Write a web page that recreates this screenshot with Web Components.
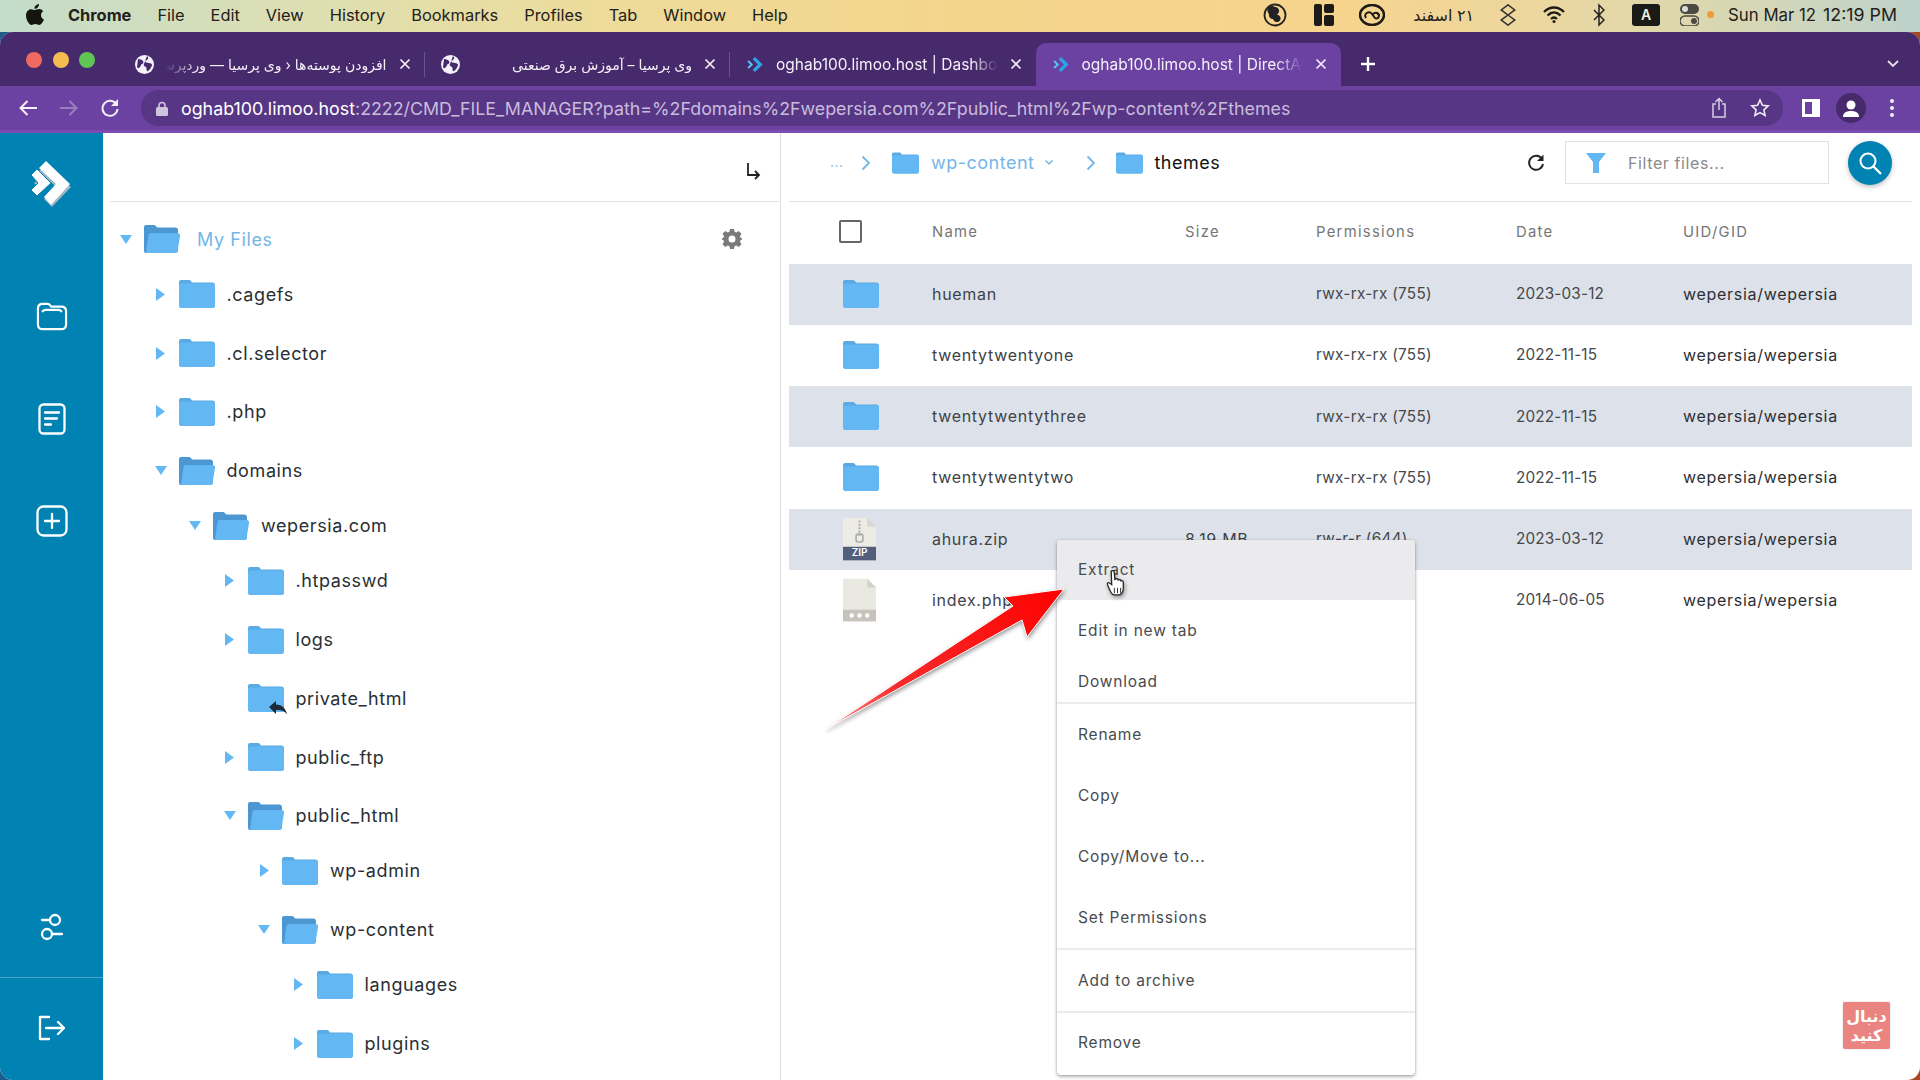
<!DOCTYPE html>
<html><head><meta charset="utf-8"><title>DirectAdmin</title>
<style>
html,body{margin:0;height:1080px;overflow:hidden}
body{position:relative;display:flex;flex-direction:column;background:linear-gradient(90deg,#1d5c8c 0,#1d5c8c 50%,#a9481f 100%);font-family:Inter,"DejaVu Sans",sans-serif}
.over{position:absolute}
</style></head><body>
<x-menubar></x-menubar>
<x-window>
  <x-tabstrip slot="tabs">
    <x-tab rtl globe label="افزودن پوسته‌ها ‹ وی پرسیا — وردپرس"></x-tab>
    <x-tab rtl globe label="وی پرسیا – آموزش برق صنعتی"></x-tab>
    <x-tab label="oghab100.limoo.host | Dashboard"></x-tab>
    <x-tab active label="oghab100.limoo.host | DirectAdmin"></x-tab>
  </x-tabstrip>
  <x-urlbar slot="bar"></x-urlbar>
  <x-sidebar slot="side"></x-sidebar>
  <x-treepanel slot="tree">
    <x-node root state="open" label="My Files">
      <x-node state="closed" label=".cagefs"></x-node>
      <x-node state="closed" label=".cl.selector"></x-node>
      <x-node state="closed" label=".php"></x-node>
      <x-node state="open" label="domains">
        <x-node state="open" label="wepersia.com">
          <x-node state="closed" label=".htpasswd"></x-node>
          <x-node state="closed" label="logs"></x-node>
          <x-node state="link" label="private_html"></x-node>
          <x-node state="closed" label="public_ftp"></x-node>
          <x-node state="open" label="public_html">
            <x-node state="closed" label="wp-admin"></x-node>
            <x-node state="open" label="wp-content">
              <x-node state="closed" label="languages"></x-node>
              <x-node state="closed" label="plugins"></x-node>
            </x-node>
          </x-node>
        </x-node>
      </x-node>
    </x-node>
  </x-treepanel>
  <x-files slot="files">
    <x-file sel kind="folder" name="hueman" perm="rwx-rx-rx (755)" date="2023-03-12"></x-file>
    <x-file kind="folder" name="twentytwentyone" perm="rwx-rx-rx (755)" date="2022-11-15"></x-file>
    <x-file sel kind="folder" name="twentytwentythree" perm="rwx-rx-rx (755)" date="2022-11-15"></x-file>
    <x-file kind="folder" name="twentytwentytwo" perm="rwx-rx-rx (755)" date="2022-11-15"></x-file>
    <x-file sel kind="zip" name="ahura.zip" size="8.19 MB" perm="rw-r-r (644)" date="2023-03-12"></x-file>
    <x-file kind="doc" name="index.php" size="405 B" perm="rw-r-r (644)" date="2014-06-05"></x-file>
  </x-files>
</x-window>
<x-ctxmenu class="over" style="left:1057px;top:540px"></x-ctxmenu>
<x-redarrow class="over" style="left:820px;top:560px"></x-redarrow>
<x-badge class="over" style="left:1843px;top:1002px"></x-badge>
<script>
function def(name,css,render){
  customElements.define(name,class extends HTMLElement{
    constructor(){super();this.attachShadow({mode:'open'});}
    connectedCallback(){this.shadowRoot.innerHTML='<style>'+css+'</style>'+render(this);}
  });
}
const a=(e,n,d='')=>e.hasAttribute(n)?(e.getAttribute(n)||''):d;
const folder=(w,h,open)=>open
?`<svg width="${w}" height="${h}" viewBox="0 0 36 28"><path d="M2 0h8c1.500 0 2 1 3 2.500h18a3 3 0 0 1 3 3V25a3 3 0 0 1-3 3H2a2 2 0 0 1-2-2V2a2 2 0 0 1 2-2z" fill="#4c97d2"/><path d="M7 8h26.500c1.800 0 2.800 1.200 2.500 3l-2.300 14.500c-.3 1.600-1.500 2.500-3 2.500H3.500c-1 0-1.500-.8-1.300-2L4.500 10C4.800 8.700 5.800 8 7 8z" fill="#63b8f3"/></svg>`
:`<svg width="${w}" height="${h}" viewBox="0 0 36 28"><path d="M2 0h8c1.500 0 2 1 3 2.500h20a3 3 0 0 1 3 3V25a3 3 0 0 1-3 3H3a3 3 0 0 1-3-3V2a2 2 0 0 1 2-2z" fill="#5aa9e3"/><path d="M0 6a2.500 2.500 0 0 1 2.500-2.500H33a3 3 0 0 1 3 3V25a3 3 0 0 1-3 3H3a3 3 0 0 1-3-3z" fill="#63b8f3"/></svg>`;
const daLogo=(s)=>`<svg width="${s}" height="${s}" viewBox="0 0 20 20"><path d="M4 2l8 8-8 8-2.500-2.500L7 10 1.500 4.500z" transform="translate(5.500 0)" fill="#2ea3e8"/><path d="M2 5.500l4.500 4.500L2 14.500 .5 13l3-3-3-3z" transform="translate(1 0)" fill="#57c0f5"/></svg>`;
const globe=`<svg width="19" height="19" viewBox="0 0 19 19"><circle cx="9.500" cy="9.500" r="9.500" fill="#f4f1f8"/><path d="M3 4c3 0 4 1 5 2s0 3-1 3-1 2-2 3-2 2-3 0zM12 1c2 2 1 3 0 4s-2 0-2 1 2 2 4 2 3 1 3 2-2 5-4 6-1-3-2-4-3-1-2-3" fill="#472a6c"/></svg>`;

def('x-menubar',`:host{display:flex;align-items:center;height:32px;flex:none;padding:0 23px 3px 26px;box-sizing:border-box;font:400 16.400px Inter,"DejaVu Sans",sans-serif;color:#23201a;
 background:linear-gradient(90deg,#c3dccb 0,#dcdfb3 15%,#ecdc9c 30%,#f4d58c 50%,#f6d48e 70%,#ecd79f 80%,#d4d7b7 92%,#bcd2cb 100%)}
 .m{display:flex;gap:26px;align-items:center;margin-left:24px}b{font-weight:700}
 .r{margin-left:auto;display:flex;align-items:center}.r>*{flex:none}
 svg{display:block}`,
()=>`<svg width="18" height="22" viewBox="0 0 18 22"><path d="M13 0c.2 2.500-2 5-4.500 4.800C8.200 2.500 10.500.2 13 0zM9 6c1 0 2.300-1 4.200-1 1.400 0 3 .8 4 2.200-3.300 2-2.800 6.800.8 8.300-.9 2.200-2.800 5.500-4.800 5.500-1.500 0-2-1-3.800-1s-2.500 1-3.900 1C3 21 0 15.500 0 11.500 0 7.500 2.600 5.200 5 5.200c1.700 0 3 .8 4 .8z" fill="#15150f"/></svg>
<div class="m"><b>Chrome</b><span>File</span><span>Edit</span><span>View</span><span>History</span><span>Bookmarks</span><span>Profiles</span><span>Tab</span><span>Window</span><span>Help</span></div>
<div class="r">
<svg width="24" height="24" viewBox="0 0 24 24" style="margin-right:27px"><circle cx="12" cy="12" r="10.500" fill="none" stroke="#222" stroke-width="1.800"/><path d="M12 4a4 4 0 0 1 2 7.500 4 4 0 0 1 3 6 4 4 0 0 1-7-1.500 4 4 0 0 1-4-5 4 4 0 0 1 6-7z" fill="#222"/></svg>
<svg width="20" height="22" viewBox="0 0 20 22" style="margin-right:25px"><rect width="8" height="22" rx="2" fill="#1c1b17"/><rect x="10" width="10" height="9" rx="2" fill="#1c1b17"/><rect x="10" y="11" width="10" height="11" rx="2" fill="#1c1b17"/></svg>
<svg width="26" height="22" viewBox="0 0 26 22" style="margin-right:27px"><ellipse cx="13" cy="11" rx="12" ry="10" fill="none" stroke="#1c1b17" stroke-width="2.500"/><path d="M7 14c-3-4 3-8 6-4l3 4c3 2 6-3 2-5-2-1-3 0-4 1" fill="none" stroke="#1c1b17" stroke-width="2"/></svg>
<span dir="rtl" style="font-size:16px;width:62px;margin-right:24px;white-space:nowrap">۲۱ اسفند</span>
<svg width="20" height="22" viewBox="0 0 20 26" style="margin-right:25px"><path d="M10 1l8 6-8 6-8-6zM10 13l8 6-8 6-8-6z" fill="none" stroke="#333" stroke-width="1.800"/></svg>
<svg width="22" height="17" viewBox="0 0 22 17" style="margin-right:28px"><path d="M1 6c6-6 14-6 20 0M4.500 9.500c4-4 9-4 13 0M8 13c2-2 4-2 6 0" fill="none" stroke="#1c1b17" stroke-width="2.300"/><circle cx="11" cy="15.500" r="1.500" fill="#1c1b17"/></svg>
<svg width="12" height="24" viewBox="0 0 12 24" style="margin-right:27px"><path d="M1 7l10 10-5 5V2l5 5L1 17" fill="none" stroke="#222" stroke-width="1.500"/></svg>
<span style="display:flex;align-items:center;justify-content:center;width:28px;height:22px;background:#1a1a16;color:#f4eedb;border-radius:3px;font-size:14px;font-weight:600;margin-right:20px">A</span>
<svg width="19" height="22" viewBox="0 0 19 22" style="margin-right:8px"><rect width="19" height="10" rx="5" fill="#4a4a42"/><circle cx="5" cy="5" r="3" fill="#ddd"/><rect y="12" width="19" height="10" rx="5" fill="none" stroke="#4a4a42" stroke-width="1.500"/><circle cx="14" cy="17" r="3" fill="#4a4a42"/></svg>
<span style="width:7px;height:7px;border-radius:50%;background:#f29a37;margin-right:14px"></span>
<span style="font-size:16.800px;margin-right:7px">Sun Mar 12</span><span style="font-size:17.800px">12:19 PM</span>
</div>`);

def('x-window',`:host{display:flex;flex-direction:column;flex:1;min-height:0;border-radius:13px;overflow:hidden;background:#fff}
.main{display:flex;flex:1;min-height:0}`,
()=>`<slot name="tabs"></slot><slot name="bar"></slot><div class="main"><slot name="side"></slot><slot name="tree"></slot><slot name="files"></slot></div>`);

def('x-tabstrip',`:host{display:flex;height:54px;box-sizing:border-box;padding:11px 0 0 119px;background:#472a6c;flex:none;position:relative}
.lights{position:absolute;left:26px;top:20px;display:flex;gap:10.500px}
.lights i{width:16px;height:16px;border-radius:50%}
.plus{margin:0 0 0 18px;align-self:center;transform:translateY(-1px)}
.chev{margin:0 20px 0 auto;align-self:center;transform:translateY(-1px)}svg{display:block}`,
()=>`<div class="lights"><i style="background:#ee6a5f"></i><i style="background:#f5bd4f"></i><i style="background:#61c554"></i></div><slot></slot>
<svg class="plus" width="18" height="18" viewBox="0 0 18 18"><path d="M9 2v14M2 9h14" stroke="#fff" stroke-width="2.400"/></svg>
<svg class="chev" width="14" height="10" viewBox="0 0 14 10"><path d="M2 2l5 5 5-5" fill="none" stroke="#e6e0ee" stroke-width="1.800"/></svg>`);

def('x-tab',`:host{display:flex;align-items:center;width:305.500px;box-sizing:border-box;height:43px;padding:0 14px 1px 16px;color:#f4f0f8;font:400 15.500px Inter,"DejaVu Sans",sans-serif;position:relative}
:host([active]){background:#6b41a2;border-radius:10px 10px 0 0;height:43px}
:host(:not([active]))::after{content:"";position:absolute;right:0;top:9px;height:25px;width:1px;background:#6a5486}
:host(:nth-child(3))::after{display:none}
.t{flex:1;min-width:0;overflow:hidden;white-space:nowrap;margin:0 12px 0 11px;-webkit-mask-image:linear-gradient(90deg,#000 88%,transparent)}
:host([rtl]) .t{-webkit-mask-image:linear-gradient(270deg,#000 85%,transparent);direction:rtl;font-size:14px}
svg{flex:none;display:block}`,
e=>`${e.hasAttribute('globe')?globe:daLogo(19)}<div class="t">${a(e,'label')}</div>
<svg width="12" height="12" viewBox="0 0 12 12"><path d="M1.500 1.500l9 9M10.500 1.500l-9 9" stroke="#f4f0f8" stroke-width="1.700"/></svg>`);

def('x-urlbar',`:host{display:flex;align-items:center;height:47px;flex:none;box-sizing:border-box;background:#6b41a2;border-bottom:3px solid #7c4bb3;color:#f4f0f8;padding:0 0 0 18px}
svg{display:block;flex:none}
.addr{display:flex;align-items:center;width:1642px;height:36px;border-radius:18px;background:#573686;margin-left:21px;box-sizing:border-box;padding:0 0 0 15px;flex:none}
.u{margin-left:13px;font:400 17.820px Inter,sans-serif;white-space:nowrap;color:#c9bcdc;padding-top:1px}.u b{font-weight:400;color:#fff}
.sp{flex:1}`,
()=>`<svg width="20" height="18" viewBox="0 0 20 18"><path d="M19 9H3M9.500 2L2.500 9l7 7" fill="none" stroke="#f4f0f8" stroke-width="2"/></svg>
<svg width="20" height="18" viewBox="0 0 20 18" style="margin-left:21px"><path d="M1 9h16M10.500 2l7 7-7 7" fill="none" stroke="#9a80c0" stroke-width="2"/></svg>
<svg width="20" height="20" viewBox="0 0 20 20" style="margin-left:21px"><path d="M16.500 6.500A7.500 7.500 0 1 0 17.500 11" fill="none" stroke="#f4f0f8" stroke-width="2"/><path d="M18 1v7h-7z" fill="#f4f0f8"/></svg>
<div class="addr"><svg width="12" height="15" viewBox="0 0 12 15"><path d="M3 7V4.500a3 3 0 0 1 6 0V7" fill="none" stroke="#cfc5de" stroke-width="1.600"/><rect y="6" width="12" height="9" rx="1.500" fill="#cfc5de"/></svg>
<span class="u"><b>oghab100.limoo.host</b>:2222/CMD_FILE_MANAGER?path=%2Fdomains%2Fwepersia.com%2Fpublic_html%2Fwp-content%2Fthemes</span><span class="sp"></span>
<svg width="16" height="22" viewBox="0 0 16 22"><path d="M5 7H2v13h12V7h-3M8 13V2M4.500 5L8 1.500 11.500 5" fill="none" stroke="#d8cfe6" stroke-width="1.500"/></svg>
<svg width="20" height="20" viewBox="0 0 20 20" style="margin:0 13px 0 23px"><path d="M10 2l2.400 5.300 5.800.6-4.300 3.900 1.200 5.700L10 14.600 4.900 17.500l1.200-5.700L1.800 7.900l5.800-.6z" fill="none" stroke="#f0ecf5" stroke-width="1.600"/></svg></div>
<svg width="18" height="18" viewBox="0 0 18 18" style="margin-left:19px"><rect width="18" height="18" fill="#fff"/><rect x="3" y="3" width="7" height="12" fill="#6b41a2"/></svg>
<span style="display:flex;align-items:center;justify-content:center;width:30px;height:30px;border-radius:50%;background:#472a6c;margin-left:16px"><svg width="16" height="17" viewBox="0 0 16 17"><circle cx="8" cy="5" r="4.500" fill="#fff"/><path d="M0 17c0-4 3-6 8-6s8 2 8 6z" fill="#fff"/></svg></span>
<svg width="6" height="20" viewBox="0 0 6 20" style="margin-left:23px"><circle cx="3" cy="3" r="2" fill="#eee"/><circle cx="3" cy="10" r="2" fill="#eee"/><circle cx="3" cy="17" r="2" fill="#eee"/></svg>`);

const ic=`fill="none" stroke="#fff" stroke-width="2.300" stroke-linecap="round" stroke-linejoin="round"`;
def('x-sidebar',`:host{display:flex;flex-direction:column;align-items:center;width:103px;flex:none;background:#0083b3;box-sizing:border-box;padding-top:27px}
svg{display:block}.n{margin-top:93px}.n+.n{margin-top:72px}.sp{flex:1}
.foot{align-self:stretch;border-top:1px solid #4aa8cc;height:103px;display:flex;align-items:center;justify-content:center;padding-bottom:2px;box-sizing:border-box;margin-top:35px}`,
()=>`<svg width="42" height="48" viewBox="0 0 42 48" style="margin-left:-2px"><path d="M16 1l24 24-19 20-8-8 12-12-17-16z" transform="translate(1 2)" fill="#9cb6c4"/><path d="M2 16l8-7 9 10-8 9-8-7 4-3z" transform="translate(1 2)" fill="#9cb6c4"/><path d="M16 1l24 23-19 21-7-8 12-13L9 8z" fill="#fff"/><path d="M1 15l6-6 14 14-14 13-6-6 7-7z" fill="#fff" stroke="#0083b3" stroke-width="1"/></svg>
<svg class="n" width="32" height="30" viewBox="0 0 34 32"><path ${ic} d="M2 8c0-3 2-5 5-5h5c2 0 3 1 4 3h11c3 0 5 2 5 5v14c0 3-2 5-5 5H7c-3 0-5-2-5-5z"/><path ${ic} d="M7 11c1-1 2-1.500 3-1.500h14c1 0 2 .5 3 1.500"/></svg>
<svg class="n" width="28" height="32" viewBox="0 0 28 32"><rect ${ic} x="1.500" y="1.500" width="25" height="29" rx="4"/><path ${ic} d="M7 9.500h14M7 15.500h12M7 21.500h6"/></svg>
<svg class="n" style="margin-top:70px" width="32" height="32" viewBox="0 0 32 32"><rect ${ic} x="1.500" y="1.500" width="29" height="29" rx="6"/><path ${ic} d="M16 9v14M9 16h14"/></svg>
<span class="sp"></span>
<svg width="24" height="30" viewBox="0 0 24 30"><circle ${ic} cx="15" cy="8" r="5"/><path ${ic} d="M10 8H2"/><circle ${ic} cx="7" cy="22" r="5"/><path ${ic} d="M12 22H22"/></svg>
<div class="foot"><svg width="28" height="26" viewBox="0 0 28 26"><path ${ic} d="M11 2H2v22h9M8 13h18M20 7l6 6-6 6"/></svg></div>`);

def('x-treepanel',`:host{display:block;width:678px;flex:none;box-sizing:border-box;border-right:1px solid #dcdcdc;overflow:hidden;padding:0 1px 0 7px}
.h{height:69px;border-bottom:1.500px solid #e3e3e3;display:flex;align-items:flex-end;justify-content:flex-end;padding:0 18px 20px 0;box-sizing:border-box}
.h svg{display:block}
.tree{padding:8px 0 0 6px;position:relative}
.gear{position:absolute;left:612px;top:27px}`,
()=>`<div class="h"><svg width="16" height="19" viewBox="0 0 16 19"><path d="M3 1v12h11M10 9l4 4-4 4" fill="none" stroke="#222" stroke-width="1.800"/></svg></div>
<div class="tree"><svg class="gear" width="20" height="20" viewBox="0 0 20 20"><path fill="#7b7b7b" fill-rule="evenodd" d="M8 0h4l.6 2.800 1.700.7L16.700 2l2.800 2.800-1.500 2.400.7 1.700L21 9.500v1l-2.300.6-.7 1.700 1.500 2.400-2.800 2.800-2.400-1.500-1.700.7L12 20H8l-.6-2.800-1.700-.7L3.300 18 .5 15.200 2 12.800l-.7-1.700L-1 10.500v-1l2.300-.6.7-1.700L.5 4.800 3.300 2l2.400 1.500 1.700-.7zM10 6.500a3.500 3.500 0 1 0 0 7 3.500 3.500 0 0 0 0-7z"/></svg><slot></slot></div>`);

def('x-node',`:host{display:block;font:400 18px Inter,"DejaVu Sans",sans-serif;color:#2a2f34;letter-spacing:.6px}
.r{display:flex;align-items:center;height:58.800px}
.arr{width:20px;margin-right:8px;display:flex;justify-content:center;flex:none}
.ic{position:relative;flex:none;display:block;height:28px}
.ic svg{display:block}
.l{margin-left:12px;white-space:nowrap}
:host([root]) .l{margin-left:17px;color:#74b6e6}
.kids{padding-left:34.500px;margin-top:-3.800px}
.lnk{position:absolute;right:-3px;bottom:-3px}`,
e=>{const s=a(e,'state');const open=s==='open';
const arr=s==='closed'?`<svg width="9" height="13" viewBox="0 0 9 13"><path d="M0 0l9 6.500L0 13z" fill="#63b8f3"/></svg>`:open?`<svg width="12" height="9" viewBox="0 0 12 9"><path d="M0 0h12L6 9z" fill="#63b8f3"/></svg>`:'';
const lnk=s==='link'?`<svg class="lnk" width="18" height="14" viewBox="0 0 18 14"><path d="M0 6l7-6v3.500c6 0 10 4 11 10-2-3.500-6-5-11-4.500V13z" fill="#1e2a38"/></svg>`:'';
return `<div class="r"><span class="arr">${arr}</span><span class="ic">${folder(36,28,open)}${lnk}</span><span class="l">${a(e,'label')}</span></div>${open?'<div class="kids"><slot></slot></div>':''}`;});

def('x-files',`:host{display:block;flex:1;min-width:0;box-sizing:border-box;padding-left:8px;padding-right:8px;font:400 15.300px Inter,sans-serif}
.top{height:69px;box-sizing:border-box;border-bottom:1.500px solid #e3e3e3;display:flex;align-items:center;padding:0 20px 9px 0;font-size:18px;letter-spacing:.5px}
svg{display:block;flex:none}
.dots{margin-left:41px;color:#8db5d0;font-size:14px;width:16px;padding-bottom:2px}
.bc{color:#74b6e6}.cur{color:#111}
.sp{flex:1}
.filter{display:flex;align-items:center;width:264px;height:43px;box-sizing:border-box;border:1.500px solid #e2e2e2;color:#8a8a8a;font-size:16px;letter-spacing:.6px;padding-left:20px;margin:0 19px 0 20px}
.go{width:44px;height:44px;border-radius:50%;background:#0083b3;display:flex;align-items:center;justify-content:center;box-shadow:0 2px 5px rgba(0,0,0,.25)}
.head{display:grid;grid-template-columns:143px 253px 131px 200px 167px 1fr;height:61.500px;box-sizing:border-box;padding-bottom:2px;align-items:center;color:#767676;letter-spacing:1.300px;font-size:14.800px}
.cb{width:19px;height:19px;border:2.500px solid #666;border-radius:2px;margin-left:50px;padding:0}`,
()=>`<div class="top"><span class="dots">...</span>
<svg width="10" height="16" viewBox="0 0 10 16" style="margin-left:15px"><path d="M1.500 1.500L8 8l-6.500 6.500" fill="none" stroke="#74b6e6" stroke-width="1.800"/></svg>
<span style="margin-left:21px">${folder(27,22,false)}</span><span class="bc" style="margin-left:12px">wp-content</span>
<svg width="10" height="8" viewBox="0 0 10 8" style="margin-left:10px"><path d="M1.500 1.500L5 5l3.500-3.500" fill="none" stroke="#74b6e6" stroke-width="1.500"/></svg>
<svg width="10" height="16" viewBox="0 0 10 16" style="margin-left:32px"><path d="M1.500 1.500L8 8l-6.500 6.500" fill="none" stroke="#74b6e6" stroke-width="1.800"/></svg>
<span style="margin-left:20px">${folder(27,22,false)}</span><span class="cur" style="margin-left:11px">themes</span>
<span class="sp"></span>
<svg width="18" height="18" viewBox="0 0 18 18"><path d="M15 5a7 7 0 1 0 1 5" fill="none" stroke="#222" stroke-width="1.900"/><path d="M16.500 .5v6.500h-6.500z" fill="#222"/></svg>
<div class="filter"><svg width="20" height="20" viewBox="0 0 20 20" style="margin-right:22px"><path d="M0 0h20l-7 9v11H7V9z" fill="#63b8f3"/></svg>Filter files...</div>
<div class="go"><svg width="24" height="24" viewBox="0 0 24 24"><circle cx="10" cy="10" r="7.500" fill="none" stroke="#fff" stroke-width="2"/><path d="M15.500 15.500L23 23" stroke="#fff" stroke-width="2.400"/></svg></div></div>
<div class="head"><div><div class="cb"></div></div><div>Name</div><div>Size</div><div>Permissions</div><div>Date</div><div>UID/GID</div></div>
<slot></slot>`);

const zip=`<svg width="33" height="44" viewBox="0 0 34 44"><path d="M0 0h25l9 9v25H0z" fill="#ecece4"/><path d="M25 0l9 9h-9z" fill="#d7d7cf"/><path d="M17 3v16" stroke="#aaa" stroke-width="2" stroke-dasharray="2 1.500"/><rect x="13.500" y="17" width="7" height="8" rx="2" fill="none" stroke="#aaa" stroke-width="1.600"/><rect y="30" width="34" height="14" fill="#525f7c"/></svg>`;
const doc=`<svg width="33" height="44" viewBox="0 0 34 44"><path d="M0 0h25l9 9v35H0z" fill="#e9e8e1"/><path d="M25 0l9 9h-9z" fill="#d2d1ca"/><rect y="32" width="34" height="12" fill="#c6c3bd"/><circle cx="9" cy="38" r="2.300" fill="#fff"/><circle cx="17" cy="38" r="2.300" fill="#fff"/><circle cx="25" cy="38" r="2.300" fill="#fff"/></svg>`;
def('x-file',`:host{display:grid;grid-template-columns:143px 253px 131px 200px 167px 1fr;height:61.250px;box-sizing:border-box;padding-bottom:1px;align-items:center;color:#3e4246;font:400 16px Inter,sans-serif;letter-spacing:.7px}
:host([sel]){background:#dde2ea}
.i{position:relative;padding-left:54px}.i svg{display:block}
.z{position:absolute;left:54px;bottom:3px;width:33px;text-align:center;color:#fff;font-size:10px;font-weight:600;letter-spacing:0}
.u{color:#2c3035;letter-spacing:.7px}.d{color:#44484c;font-size:15.300px;letter-spacing:.15px}.p{color:#44484c;font-size:15.300px;letter-spacing:.3px}`,
e=>{const k=a(e,'kind');const ic=k==='folder'?folder(36,28,false):k==='zip'?zip+'<span class="z">ZIP</span>':doc;
return `<div class="i">${ic}</div><div>${a(e,'name')}</div><div>${a(e,'size')}</div><div class="p">${a(e,'perm')}</div><div class="d">${a(e,'date')}</div><div class="u">wepersia/wepersia</div>`;});

def('x-ctxmenu',`:host{display:block;width:358px;background:#fff;border-radius:4px;box-shadow:0 1px 3px rgba(0,0,0,.35),0 2px 5px rgba(0,0,0,.12);font:400 15.500px Inter,sans-serif;letter-spacing:.8px;color:#484b4f}
.g{border-bottom:2px solid #ececee}.g:last-child{border:none}
.i{display:flex;align-items:center;padding-left:21px;box-sizing:border-box}
.h{background:#ebebed;border-radius:4px 4px 0 0}`,
()=>`<div class="g"><div class="i h" style="height:60px;padding-bottom:2px">Extract</div><div class="i" style="height:60px">Edit in new tab</div><div class="i" style="height:42px">Download</div></div>
<div class="g"><div class="i" style="height:61px;padding-bottom:1px">Rename</div><div class="i" style="height:61px">Copy</div><div class="i" style="height:61px">Copy/Move to...</div><div class="i" style="height:61px">Set Permissions</div></div>
<div class="g"><div class="i" style="height:61px">Add to archive</div></div>
<div class="g"><div class="i" style="height:62px;padding-bottom:4px">Remove</div></div>`);

def('x-redarrow',`:host{display:block;width:320px;height:180px;pointer-events:none}svg{display:block}`,
()=>`<svg width="320" height="180" viewBox="820 560 320 180" style="filter:drop-shadow(1px 2px 2px rgba(0,0,0,.4))"><defs><linearGradient id="g" x1="826" y1="729" x2="1065" y2="589" gradientUnits="userSpaceOnUse"><stop offset="0" stop-color="#ff8d8d"/><stop offset=".3" stop-color="#f72a2a"/><stop offset="1" stop-color="#ff0000"/></linearGradient></defs><path d="M826 729L1013 606 1004 597 1064 589 1027 637 1022 620z" fill="url(#g)" stroke="#fff" stroke-width="1"/>
<g transform="translate(1107 570) scale(1.050)"><path d="M4 1c2-1 3 0 3 2l.5 6 1-.5c1.200-.5 2 0 2.200 1 1-.7 2.200-.4 2.500.8 1-.5 2.300 0 2.300 1.500v6c0 3-2 6-4.500 6H7c-2 0-3-2-4-4L.5 14c-.7-1.300.7-2.500 2-1.500L4.500 14z" fill="#fff" stroke="#222" stroke-width="1.200"/><path d="M7 17v5M10 17v5M13 17v5" stroke="#222" stroke-width=".9"/></g></svg>`);

def('x-badge',`:host{display:flex;align-items:center;justify-content:center;width:47px;height:47px;background:#ea8480;border-radius:2px;box-shadow:0 0 2px rgba(0,0,0,.2);color:#fff;font:700 16px/19px "DejaVu Sans",sans-serif;text-align:center}`,
()=>`<div dir="rtl">دنبال<br>کنید</div>`);
</script>
</body></html>
